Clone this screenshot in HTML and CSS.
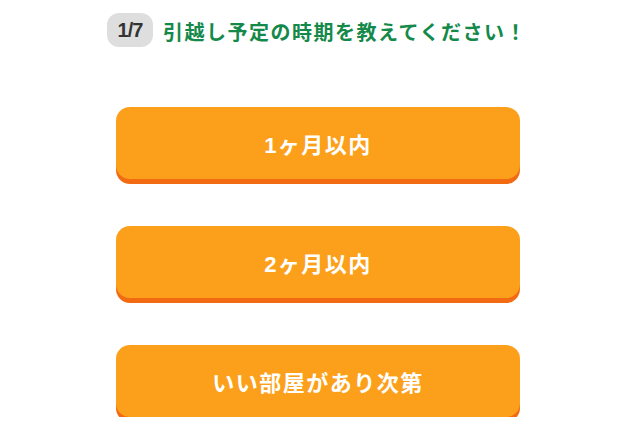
FILE: index.html
```html
<!DOCTYPE html>
<html lang="ja">
<head>
  <meta charset="UTF-8" />
  <title>引越し予定の時期</title>
  <link rel="stylesheet" href="styles.css">
</head>
<body>
  <div class="quiz">
    <div class="question">
      <span class="step">1/7</span>
      <h2>引越し予定の時期を教えてください！</h2>
    </div>
    <div class="choices">
      <button class="choice">1ヶ月以内</button>
      <button class="choice">2ヶ月以内</button>
      <button class="choice">いい部屋があり次第</button>
    </div>
  </div>
</body>
</html>
```

FILE: styles.css
```css
body {
  margin: 0;
  background: #fff;
  font-family: "Noto Sans CJK JP", "Liberation Sans", sans-serif;
}
.quiz { padding-top: 13px; }
.question {
  display: flex;
  align-items: center;
  gap: 10px;
  margin-left: 107px;
}
.step {
  display: inline-flex;
  align-items: center;
  justify-content: center;
  width: 46px;
  height: 34px;
  border-radius: 12px;
  background: #dedede;
  color: #333;
  font-family: "Liberation Sans", Arial, sans-serif;
  font-weight: bold;
  font-size: 20px;
  letter-spacing: -1px;
}
h2 {
  margin: 0;
  padding-top: 3px;
  color: #14894a;
  font-size: 20px;
  font-weight: bold;
  letter-spacing: 1.5px;
}
.choices {
  display: flex;
  flex-direction: column;
  gap: 47px;
  width: 404px;
  margin: 60px 0 0 116px;
}
.choice {
  height: 72px;
  border: none;
  border-radius: 14px;
  background: #fca01b;
  box-shadow: 0 5px 0 #f26b12;
  color: #fff;
  font-family: "Liberation Sans", "Noto Sans CJK JP", sans-serif;
  font-size: 22px;
  font-weight: bold;
  letter-spacing: 1.5px;
}
```
